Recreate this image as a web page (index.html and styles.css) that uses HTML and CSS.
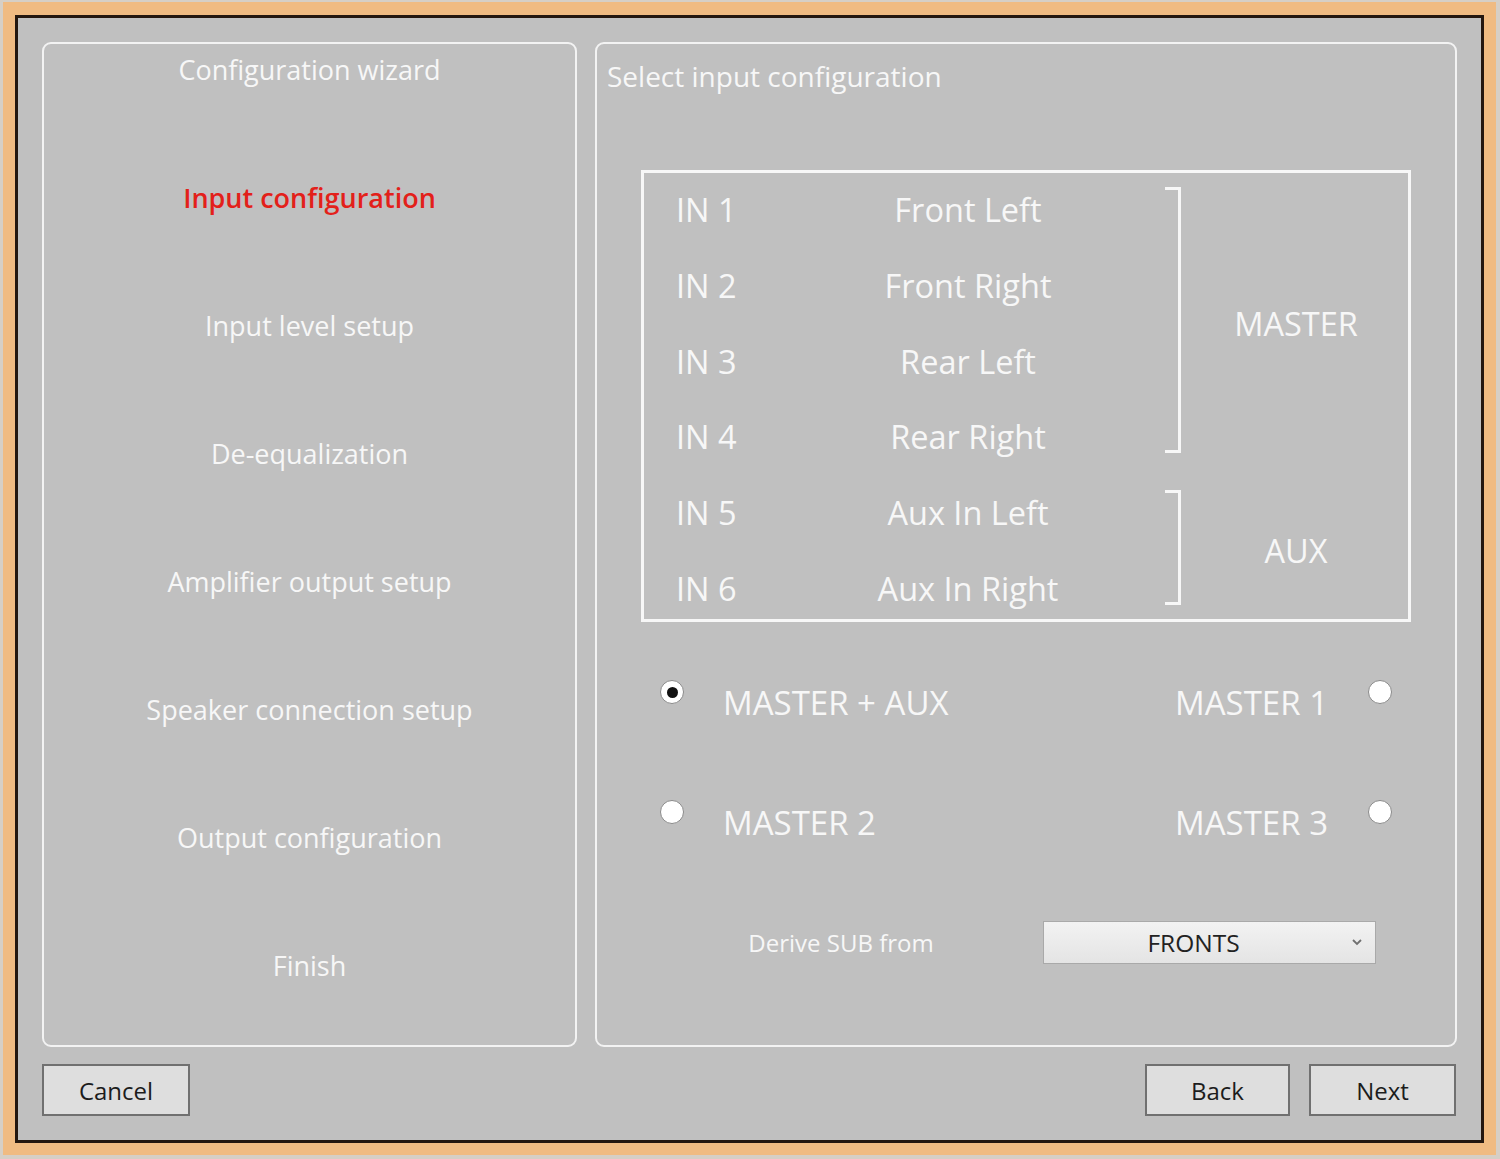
FILE: index.html
```html
<!DOCTYPE html>
<html lang="en">
<head>
<meta charset="utf-8">
<title>Configuration wizard</title>
<link rel="stylesheet" href="styles.css">
</head>
<body>
<div class="frame">
  <div class="window">
    <div class="panels">
      <aside class="steps">
        <div class="step">Configuration wizard</div>
        <div class="step active">Input configuration</div>
        <div class="step">Input level setup</div>
        <div class="step">De-equalization</div>
        <div class="step">Amplifier output setup</div>
        <div class="step">Speaker connection setup</div>
        <div class="step">Output configuration</div>
        <div class="step">Finish</div>
      </aside>
      <section class="main">
        <div class="main-title">Select input configuration</div>
        <div class="map">
          <div class="in r1">IN 1</div><div class="name r1">Front Left</div>
          <div class="in r2">IN 2</div><div class="name r2">Front Right</div>
          <div class="in r3">IN 3</div><div class="name r3">Rear Left</div>
          <div class="in r4">IN 4</div><div class="name r4">Rear Right</div>
          <div class="in r5">IN 5</div><div class="name r5">Aux In Left</div>
          <div class="in r6">IN 6</div><div class="name r6">Aux In Right</div>
          <div class="bracket g-master"></div>
          <div class="group g-master">MASTER</div>
          <div class="bracket g-aux"></div>
          <div class="group g-aux">AUX</div>
        </div>
        <div class="options">
          <div class="opt opt-left"><span class="radio checked"></span><span>MASTER + AUX</span></div>
          <div class="opt opt-right"><span>MASTER 1</span><span class="radio"></span></div>
          <div class="opt opt-left"><span class="radio"></span><span>MASTER 2</span></div>
          <div class="opt opt-right"><span>MASTER 3</span><span class="radio"></span></div>
        </div>
        <div class="derive">
          <span class="derive-label">Derive SUB from</span>
          <div class="select">
            <span class="select-value">FRONTS</span>
            <svg class="chev" width="12" height="8" viewBox="0 0 12 8"><path d="M2 2 L6 6 L10 2" fill="none" stroke="#707070" stroke-width="1.8"/></svg>
          </div>
        </div>
      </section>
    </div>
    <div class="buttons">
      <button class="btn btn-cancel">Cancel</button>
      <span class="spacer"></span>
      <button class="btn btn-back">Back</button>
      <button class="btn btn-next">Next</button>
    </div>
  </div>
</div>
</body>
</html>
```

FILE: styles.css
```css
html, body {
  margin: 0;
  padding: 0;
}
body {
  background: #d6cfc6;
  padding: 2px 0 0 3px;
  font-family: "Open Sans", "Noto Sans", "Liberation Sans", sans-serif;
  width: 1500px;
  height: 1159px;
  box-sizing: border-box;
  overflow: hidden;
}
.frame {
  box-sizing: border-box;
  width: 1493px;
  height: 1153px;
  border: 12px solid #f0bb82;
  border-top-width: 13px;
}
.window {
  box-sizing: border-box;
  height: 100%;
  border: 3px solid #24170f;
  background: #c0c0c0;
  padding: 24px;
  display: flex;
  flex-direction: column;
  gap: 17px;
}
.panels {
  flex: 1;
  display: flex;
  gap: 18px;
  min-height: 0;
}
.steps {
  box-sizing: border-box;
  width: 535px;
  border: 2px solid #f3f3f3;
  border-radius: 9px;
  padding-top: 4px;
  display: flex;
  flex-direction: column;
  gap: 84px;
}
.step {
  line-height: 44px;
  text-align: center;
  color: #f7f7f7;
  font-size: 27px;
}
.step.active {
  color: #e3201a;
  font-weight: 600;
}
.main {
  flex: 1;
  box-sizing: border-box;
  border: 2px solid #f3f3f3;
  border-radius: 9px;
  display: flex;
  flex-direction: column;
}
.main-title {
  margin-top: 12px;
  padding-left: 10px;
  line-height: 40px;
  font-size: 28px;
  color: #f7f7f7;
}
.map {
  box-sizing: border-box;
  margin: 74px 0 0 44px;
  width: 770px;
  height: 452px;
  border: 3px solid #f7f7f7;
  padding: 17px 0 10px 32px;
  display: grid;
  grid-template-columns: 140px 304px 64px 224px;
  grid-template-rows: repeat(6, 40px);
  row-gap: 35.8px;
  color: #f7f7f7;
  font-size: 32.5px;
}
.in, .name, .group {
  line-height: 40px;
}
.in { grid-column: 1; }
.name { grid-column: 2; text-align: center; white-space: nowrap; }
.r1 { grid-row: 1; }
.r2 { grid-row: 2; }
.r3 { grid-row: 3; }
.r4 { grid-row: 4; }
.r5 { grid-row: 5; }
.r6 { grid-row: 6; }
.bracket {
  grid-column: 3;
  justify-self: end;
  width: 13px;
  margin-right: 3px;
  border: 3px solid #f7f7f7;
  border-left: none;
}
.bracket.g-master { grid-row: 1 / 5; margin-top: -3px; margin-bottom: 4px; }
.bracket.g-aux { grid-row: 5 / 7; margin-top: -3px; margin-bottom: 4px; }
.group {
  grid-column: 4;
  align-self: center;
  text-align: center;
}
.group.g-master { grid-row: 1 / 5; }
.group.g-aux { grid-row: 5 / 7; }
.options {
  margin-top: 50px;
  padding: 0 63px;
  display: grid;
  grid-template-columns: 1fr 1fr;
  grid-auto-rows: 60px;
  row-gap: 60px;
  color: #f7f7f7;
  font-size: 33px;
}
.opt {
  display: flex;
  align-items: center;
  gap: 39px;
  white-space: nowrap;
}
.opt-right {
  justify-content: flex-end;
  gap: 40px;
}
.radio {
  box-sizing: border-box;
  width: 24px;
  height: 24px;
  border-radius: 50%;
  background: #ffffff;
  border: 1px solid #8a8a8a;
  margin-bottom: 20px;
  flex: none;
  display: flex;
  align-items: center;
  justify-content: center;
}
.radio.checked::after {
  content: "";
  width: 11px;
  height: 11px;
  border-radius: 50%;
  background: #111;
}
.derive {
  margin-top: 68px;
  display: flex;
  align-items: center;
  height: 44px;
}
.derive-label {
  margin-left: 103px;
  width: 282px;
  text-align: center;
  color: #f7f7f7;
  font-size: 24px;
}
.select {
  box-sizing: border-box;
  margin-left: 61px;
  width: 333px;
  height: 43px;
  border: 1px solid #a9a9a9;
  background: linear-gradient(#f2f2f2, #e4e4e4);
  display: flex;
  align-items: center;
  padding-right: 32px;
  position: relative;
}
.select-value {
  flex: 1;
  text-align: center;
  color: #222;
  font-size: 24.5px;
}
.chev {
  position: absolute;
  right: 12px;
  top: 16px;
}
.buttons {
  height: 52px;
  display: flex;
  gap: 19px;
}
.spacer { flex: 1; }
.btn {
  box-sizing: border-box;
  height: 52px;
  border: 2px solid #707070;
  background: #dedede;
  color: #1c1c1c;
  font-family: "Open Sans", "Noto Sans", "Liberation Sans", sans-serif;
  font-size: 24px;
  padding: 0;
  border-radius: 0;
}
.btn-cancel { width: 148px; }
.btn-back { width: 145px; }
.btn-next { width: 147px; margin-right: 1px; }
```
